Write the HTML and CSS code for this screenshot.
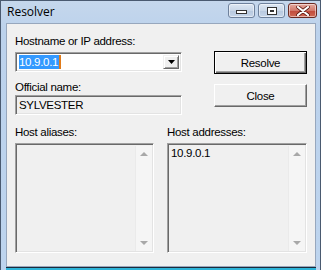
FILE: index.html
```html
<!DOCTYPE html>
<html lang="en">
<head>
    <meta charset="UTF-8">
    <title>Resolver</title>
    <link rel="stylesheet" href="styles.css">
</head>
<body>

<div class="window">
    <div class="titlebar">
        <span class="title">Resolver</span>
        <div class="caption-btns">
            <div class="cap-btn"><span class="ico-min"></span></div>
            <div class="cap-btn"><span class="ico-max"></span></div>
            <div class="cap-btn close">
                <svg width="14" height="10" viewBox="0 0 14 10">
                    <path d="M2 1 L12 9 M12 1 L2 9" stroke="#5a1810" stroke-width="3.6" stroke-linecap="round"/>
                    <path d="M2 1 L12 9 M12 1 L2 9" stroke="#fff" stroke-width="2.2" stroke-linecap="round"/>
                </svg>
            </div>
        </div>
    </div>

    <div class="client">
        <div class="top">
            <div class="left">
                <div class="lbl">Hostname or IP address:</div>
                <div class="combo">
                    <div class="combo-text"><span class="sel">10.9.0.1</span><span class="caret"></span></div>
                    <div class="drop">
                        <svg width="7" height="4" viewBox="0 0 7 4"><path d="M0 0 H7 L3.5 4 Z" fill="#000"/></svg>
                    </div>
                </div>
                <div class="lbl lbl-gap">Official name:</div>
                <div class="static">SYLVESTER</div>
            </div>
            <div class="right">
                <div class="btn default">Resolve</div>
                <div class="btn">Close</div>
            </div>
        </div>

        <div class="lists">
            <div class="col">
                <div class="lbl">Host aliases:</div>
                <div class="listbox">
                    <div class="items"></div>
                    <div class="scroll">
                        <span class="arr up"></span>
                        <span class="arr down"></span>
                    </div>
                </div>
            </div>
            <div class="col">
                <div class="lbl">Host addresses:</div>
                <div class="listbox">
                    <div class="items">10.9.0.1</div>
                    <div class="scroll">
                        <span class="arr up"></span>
                        <span class="arr down"></span>
                    </div>
                </div>
            </div>
        </div>
    </div>
</div>

</body>
</html>
```

FILE: styles.css
```css
* {
    margin: 0;
    padding: 0;
    box-sizing: border-box;
}
body {
    width: 321px;
    height: 270px;
    overflow: hidden;
    font-family: 'Liberation Sans', Arial, sans-serif;
    font-size: 11.5px;
    letter-spacing: -0.3px;
    color: #000;
}
.window {
    position: relative;
    width: 321px;
    height: 270px;
    background: linear-gradient(#c5d7ec, #bcd2ec 30px, #bdd4ee);
    border: 1px solid #4a5a70;
    border-bottom: none;
    display: flex;
    flex-direction: column;
}
.titlebar {
    height: 22px;
    display: flex;
    align-items: center;
    justify-content: space-between;
    padding-left: 6px;
}
.title {
    font-family: 'Open Sans', 'Noto Sans', sans-serif;
    font-size: 12px;
    letter-spacing: 0;
    color: #000;
    margin-top: -1px;
}
.caption-btns {
    display: flex;
    gap: 3px;
    margin-top: -3px;
    margin-right: 3px;
}
.cap-btn {
    width: 27px;
    height: 15px;
    border: 1px solid #6e819c;
    border-radius: 3px;
    background: linear-gradient(#dde7f3, #c9d7e8 50%, #b7c8de 51%, #c6d6ea);
    display: flex;
    align-items: center;
    justify-content: center;
    box-shadow: inset 0 0 0 1px rgba(255, 255, 255, 0.5);
}
.cap-btn.close {
    width: 29px;
    border-color: #6b2a22;
    background: linear-gradient(#e4a99f, #d27a6c 50%, #c0493a 51%, #cf6a55);
}
.ico-min {
    width: 11px;
    height: 4px;
    border: 1px solid #333;
    background: #fff;
    margin-top: 3px;
}
.ico-max {
    width: 10px;
    height: 8px;
    border: 1px solid #333;
    background: #fff;
    box-shadow: inset 0 0 0 2px #fff, inset 0 0 0 3px #333;
}
.client {
    flex: 1;
    margin: 0 4px 3px 5px;
    background: #f0f0f0;
    border: 1px solid #97a7bd;
    padding: 10px 8px 0 8px;
    box-shadow: 0 1px 0 #1c2a3a, 0 3px 0 #2cb4d8;
}
.lbl {
    height: 14px;
    line-height: 14px;
    margin-bottom: 4px;
    white-space: nowrap;
}
.lbl-gap {
    margin-top: 8px;
    margin-bottom: 1px;
}
.top {
    display: flex;
    gap: 32px;
}
.left {
    width: 170px;
}
.combo {
    height: 20px;
    background: #fff;
    border: 1px solid;
    border-color: #a0a0a0 #fff #fff #a0a0a0;
    box-shadow: inset 1px 1px 0 #696969, inset -1px -1px 0 #e3e3e3;
    display: flex;
    padding: 2px;
}
.combo-text {
    flex: 1;
    display: flex;
    align-items: center;
    padding-left: 1px;
}
.sel {
    background: #3399ff;
    color: #fff;
    height: 14px;
    line-height: 14px;
    padding-right: 1px;
}
.caret {
    width: 2px;
    height: 14px;
    background: #e07b1a;
}
.drop {
    width: 16px;
    background: #f0f0f0;
    border: 1px solid;
    border-color: #f0f0f0 #696969 #696969 #f0f0f0;
    box-shadow: inset 1px 1px 0 #fff, inset -1px -1px 0 #a0a0a0;
    display: flex;
    align-items: center;
    justify-content: center;
}
.static {
    height: 20px;
    border: 1px solid;
    border-color: #a0a0a0 #fff #fff #a0a0a0;
    box-shadow: inset 1px 1px 0 #696969, inset -1px -1px 0 #e3e3e3;
    padding: 2px 3px;
    line-height: 14px;
}
.right {
    display: flex;
    flex-direction: column;
    gap: 10px;
    padding-top: 17px;
}
.btn {
    width: 93px;
    height: 23px;
    display: flex;
    align-items: center;
    justify-content: center;
    background: #f0f0f0;
    border: 1px solid;
    border-color: #fff #696969 #696969 #fff;
    box-shadow: inset -1px -1px 0 #a0a0a0;
}
.btn.default {
    border: 1px solid #000;
    box-shadow: inset 1px 1px 0 #fff, inset -1px -1px 0 #696969, inset -2px -2px 0 #a0a0a0;
}
.lists {
    display: flex;
    gap: 13px;
    margin-top: 10px;
}
.col {
    width: 140px;
}
.col + .col {
    width: 141px;
}
.listbox {
    height: 110px;
    border: 1px solid;
    border-color: #a0a0a0 #fff #fff #a0a0a0;
    box-shadow: inset 1px 1px 0 #696969, inset -1px -1px 0 #e3e3e3;
    display: flex;
    padding: 2px 1px 1px 2px;
}
.items {
    flex: 1;
    line-height: 14px;
    padding-left: 1px;
}
.scroll {
    width: 17px;
    background: #f5f5f5;
    border-left: 1px solid #eaeaea;
    display: flex;
    flex-direction: column;
    justify-content: space-between;
    align-items: center;
    padding: 6px 0 6px;
}
.arr {
    width: 0;
    height: 0;
    border-left: 4px solid transparent;
    border-right: 4px solid transparent;
}
.arr.up {
    border-bottom: 4px solid #a8a8a8;
}
.arr.down {
    border-top: 4px solid #a8a8a8;
}
```
